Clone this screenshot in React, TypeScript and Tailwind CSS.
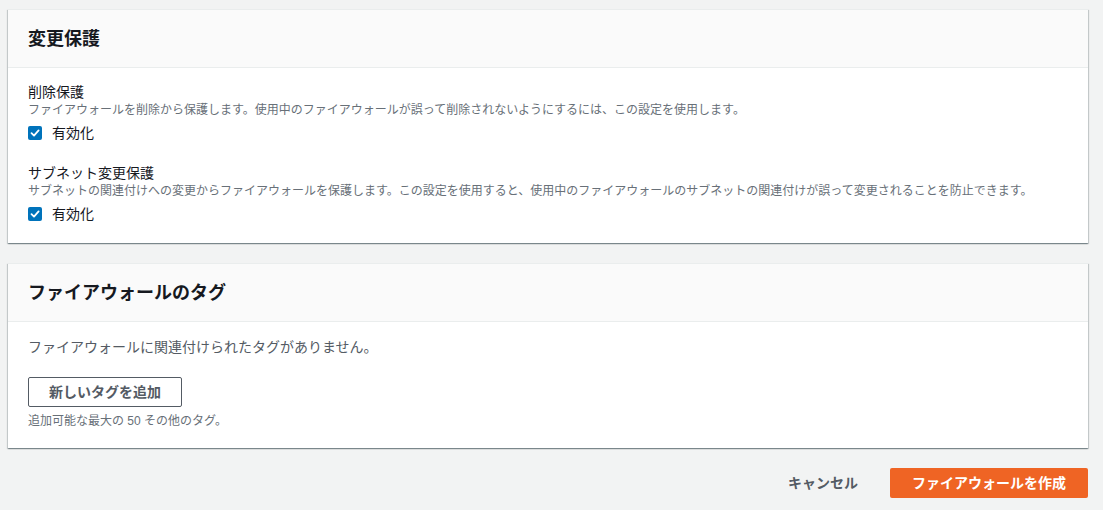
import React from "react";

const font = { fontFamily: '"Liberation Sans", "Noto Sans CJK JP", sans-serif' };

function Check() {
  return (
    <span className="flex h-[14px] w-[14px] items-center justify-center rounded-[2px] bg-[#0073bb]">
      <svg width="10" height="10" viewBox="0 0 10 10" fill="none">
        <path d="M1.5 5.2 L4 7.6 L8.6 2.4" stroke="white" strokeWidth="1.8" strokeLinecap="round" strokeLinejoin="round" />
      </svg>
    </span>
  );
}

const cardCls =
  "bg-white border-t border-[#eaeded] shadow-[0_1px_1px_0_rgba(0,28,36,0.3),1px_1px_1px_0_rgba(0,28,36,0.15),-1px_1px_1px_0_rgba(0,28,36,0.15)]";

function Header({ title }: { title: string }) {
  return (
    <div className="h-[58px] flex items-center px-[20px] bg-[#fafafa] border-b border-[#eaeded]">
      <h2 className="text-[18px] leading-[22px] font-bold text-[#16191f]">{title}</h2>
    </div>
  );
}

function Setting({ label, desc }: { label: string; desc: string }) {
  return (
    <div className="flex flex-col">
      <div className="text-[14px] leading-[20px] text-[#16191f]">{label}</div>
      <div className="text-[12px] leading-[16px] text-[#687078]">{desc}</div>
      <div className="mt-[5px] flex h-[20px] items-center gap-[10px]">
        <Check />
        <span className="text-[14px] leading-[20px] text-[#16191f]">有効化</span>
      </div>
    </div>
  );
}

export default function App() {
  return (
    <div style={font} className="min-h-[510px] bg-[#f2f3f3] pl-[8px] pr-[15px] pt-[9px] pb-[12px]">
      <div className={cardCls}>
        <Header title="変更保護" />
        <div className="px-[20px] pt-[14px] pb-[19px] flex flex-col gap-[20px]">
          <Setting
            label="削除保護"
            desc="ファイアウォールを削除から保護します。使用中のファイアウォールが誤って削除されないようにするには、この設定を使用します。"
          />
          <Setting
            label="サブネット変更保護"
            desc="サブネットの関連付けへの変更からファイアウォールを保護します。この設定を使用すると、使用中のファイアウォールのサブネットの関連付けが誤って変更されることを防止できます。"
          />
        </div>
      </div>

      <div className={cardCls + " mt-[20px]"}>
        <Header title="ファイアウォールのタグ" />
        <div className="px-[20px] pt-[15px] pb-[19px] flex flex-col items-start">
          <div className="text-[14px] leading-[20px] text-[#545b64]">
            ファイアウォールに関連付けられたタグがありません。
          </div>
          <button className="mt-[20px] h-[30px] px-[20px] rounded-[2px] border border-[#545b64] bg-white text-[14px] font-bold text-[#545b64] leading-[20px]">
            新しいタグを追加
          </button>
          <div className="mt-[6px] text-[12px] leading-[16px] text-[#687078]">
            追加可能な最大の 50 その他のタグ。
          </div>
        </div>
      </div>

      <div className="mt-[20px] flex items-center justify-end gap-[12px]">
        <button className="h-[30px] px-[20px] text-[14px] font-bold text-[#545b64] leading-[20px]">
          キャンセル
        </button>
        <button className="h-[30px] px-[22px] rounded-[2px] bg-[#ef6424] text-[14px] font-bold text-white leading-[20px]">
          ファイアウォールを作成
        </button>
      </div>
    </div>
  );
}
